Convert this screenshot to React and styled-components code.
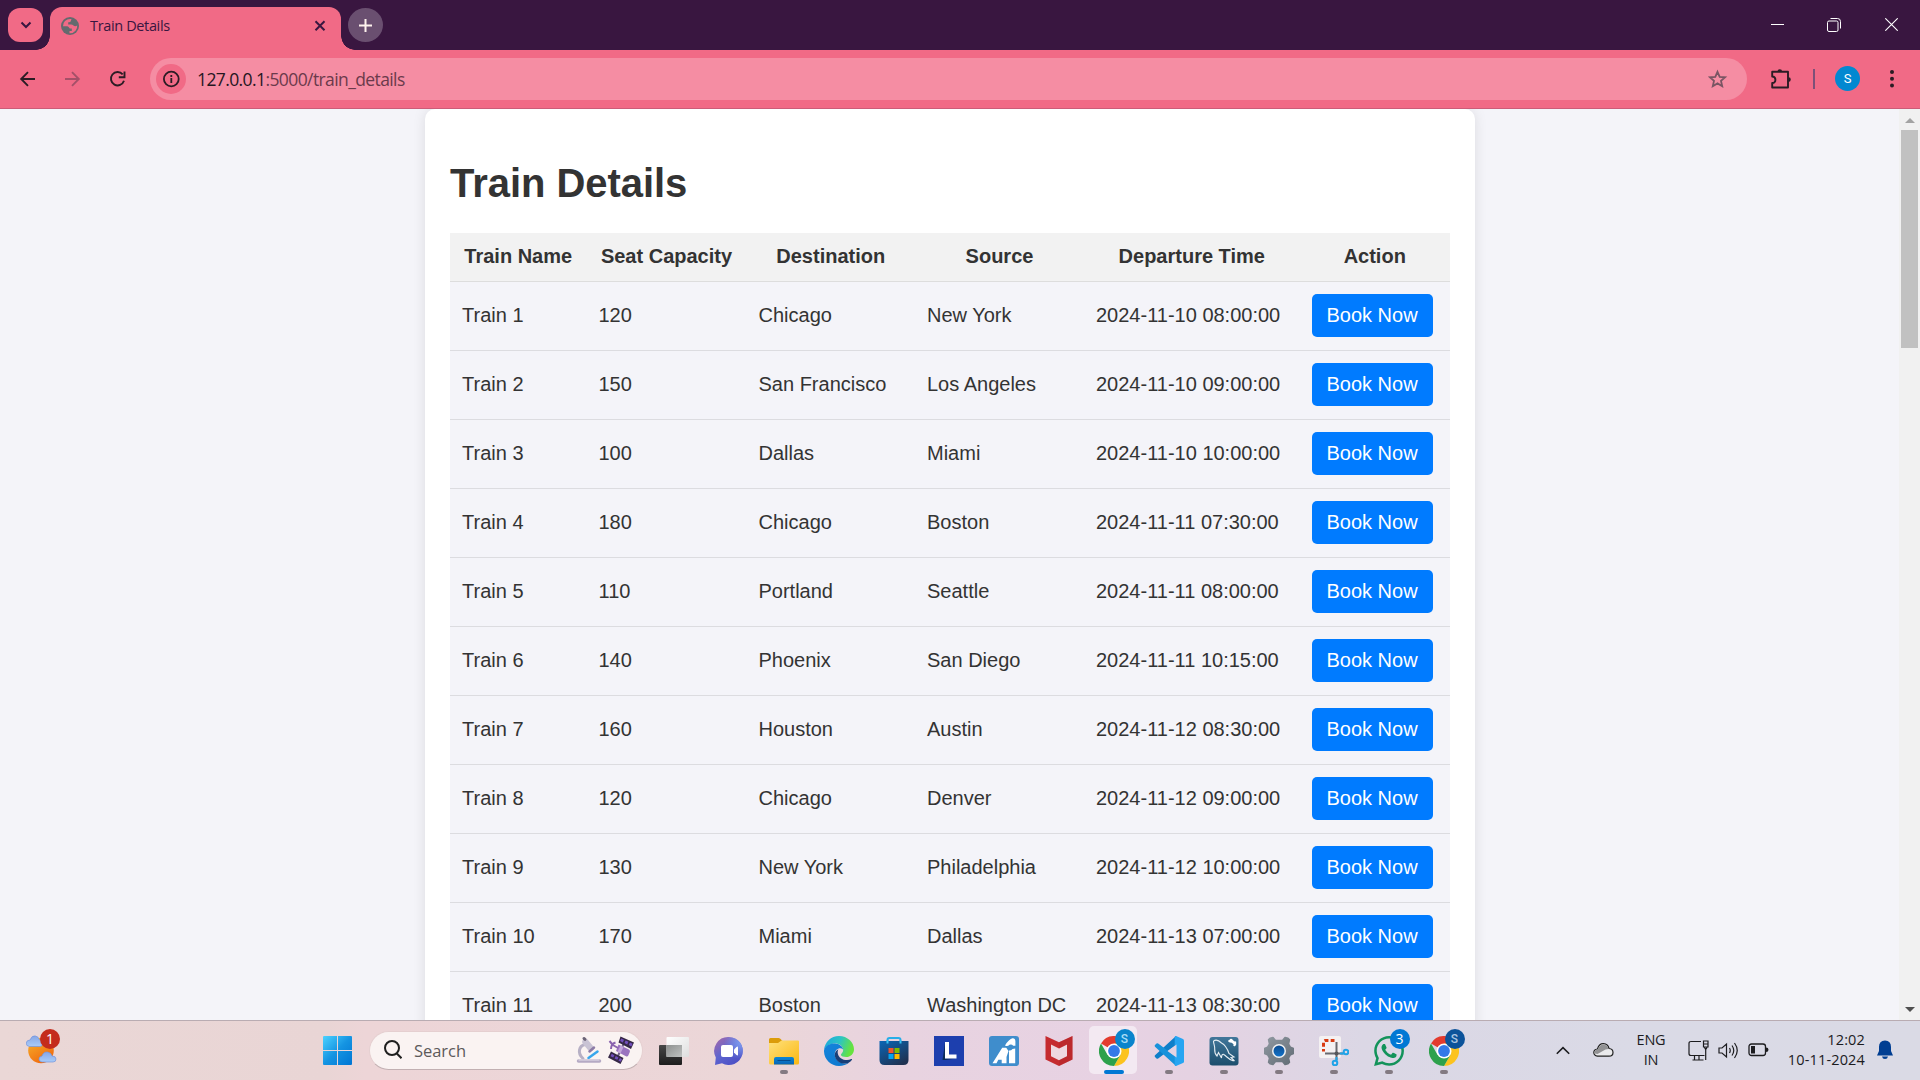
import React from "react";
import styled, { createGlobalStyle } from "styled-components";

const uiFont = `"Segoe UI", "Open Sans", "Noto Sans", sans-serif`;

const GlobalStyle = createGlobalStyle`
  * { box-sizing: border-box; }
  html, body { margin: 0; padding: 0; overflow: hidden; }
  svg { display: block; flex: none; }
`;

/* ---------- window ---------- */
const Screen = styled.div`
  width: 1920px;
  height: 1080px;
  display: flex;
  flex-direction: column;
  overflow: hidden;
  font-family: ${uiFont};
`;

const TabStrip = styled.div`
  height: 50px;
  flex: none;
  display: flex;
  padding: 7px 0 0 8px;
  background: #391640;
`;

const TabSearch = styled.div`
  width: 35px;
  height: 34px;
  margin-top: 1px;
  border-radius: 12px;
  background: #f16a86;
  display: grid;
  place-items: center;
`;

const Tab = styled.div`
  position: relative;
  width: 291px;
  height: 43px;
  margin-left: 7px;
  padding: 0 11px 6px 11px;
  display: flex;
  align-items: center;
  background: #f16a86;
  border-radius: 12px 12px 0 0;
  &::before, &::after {
    content: "";
    position: absolute;
    bottom: 0;
    width: 14px;
    height: 14px;
  }
  &::before { left: -14px; background: radial-gradient(circle at 0 0, transparent 13.5px, #f16a86 14px); }
  &::after { right: -14px; background: radial-gradient(circle at 100% 0, transparent 13.5px, #f16a86 14px); }
`;

const TabTitle = styled.span`
  flex: 1;
  margin-left: 11px;
  font-size: 14.5px;
  letter-spacing: -0.36px;
  line-height: 20px;
  color: #391640;
  white-space: nowrap;
`;

const NewTab = styled.div`
  width: 35px;
  height: 34px;
  margin: 1px 0 0 7px;
  border-radius: 50%;
  background: #6a4f70;
  display: grid;
  place-items: center;
`;

const WindowControls = styled.div`
  margin-left: auto;
  height: 35px;
  display: flex;
`;

const WindowButton = styled.div`
  width: 57px;
  display: grid;
  place-items: center;
`;

const Toolbar = styled.div`
  height: 59px;
  flex: none;
  display: flex;
  align-items: center;
  padding: 0 17px;
  background: #f16a86;
  border-bottom: 1px solid #cc5c78;
`;

const NavButton = styled.div`
  width: 45px;
  height: 30px;
  display: flex;
  align-items: center;
`;

const AddressBar = styled.div`
  width: 1597px;
  height: 42px;
  margin-left: -2px;
  padding: 0 19px 0 6px;
  border-radius: 21px;
  background: #f58da3;
  display: flex;
  align-items: center;
`;

const SiteInfo = styled.div`
  width: 30px;
  height: 30px;
  border-radius: 50%;
  background: #f16a86;
  display: grid;
  place-items: center;
`;

const Url = styled.div`
  flex: 1;
  margin-left: 11px;
  font-size: 17.5px;
  letter-spacing: -0.6px;
  line-height: 24px;
  color: #6b3a4b;
  white-space: nowrap;
`;

const UrlHost = styled.span`
  color: #25161f;
`;

const ExtensionsButton = styled.div`
  width: 22px;
  margin-left: 23px;
`;

const ToolbarDivider = styled.div`
  width: 2px;
  height: 20px;
  margin: 0 20px 0 21px;
  background: #7d5078;
`;

const Avatar = styled.div`
  width: 25px;
  height: 25px;
  margin-bottom: 1px;
  border-radius: 50%;
  background: #0288d1;
  color: #fff;
  font: 13px/25px Roboto, sans-serif;
  text-align: center;
`;

const MenuButton = styled.div`
  width: 6px;
  margin-left: 29px;
`;

/* ---------- page ---------- */
const Viewport = styled.div`
  height: 911px;
  flex: none;
  display: flex;
  overflow: hidden;
`;

const Page = styled.div`
  width: 1899px;
  background: #f4f4f9;
  display: flex;
  align-items: flex-start;
  padding-left: 425px;
  font-family: Arial, "Liberation Sans", sans-serif;
  color: #333;
`;

const Card = styled.div`
  width: 1050px;
  height: 1400px;
  flex: none;
  padding: 25px;
  background: #fff;
  border-radius: 10px;
  box-shadow: 0 0 12.5px rgba(0, 0, 0, 0.1);
`;

const Title = styled.h1`
  margin: 26px 0 27px;
  font-size: 40px;
  line-height: 46px;
  font-weight: bold;
  letter-spacing: -0.05px;
`;

const Table = styled.table`
  width: 1000px;
  table-layout: fixed;
  border-spacing: 0;
  background: #f4f4f9;
  font-size: 20px;
  line-height: 23px;
`;

const Col = styled.col`
  width: ${(p) => p.$w}px;
`;

const Th = styled.th`
  height: 49px;
  padding: 0 12px 2px;
  background: #f2f2f2;
  border-bottom: 1px solid #ddd;
  text-align: center;
  white-space: nowrap;
`;

const Td = styled.td`
  height: 69px;
  padding: 0 12px 2px 12px;
  border-bottom: 1px solid #dcdce0;
  white-space: nowrap;
`;

const BookButton = styled.button`
  display: block;
  width: 121px;
  height: 43px;
  padding: 0;
  border: 0;
  border-radius: 5px;
  background: #007bff;
  color: #fff;
  font: inherit;
`;

const Scrollbar = styled.div`
  width: 21px;
  background: #f1f1f1;
  display: flex;
  flex-direction: column;
  align-items: center;
  padding: 9px 0 8px;
`;

const Thumb = styled.div`
  width: 17px;
  height: 218px;
  margin-top: 7px;
  margin-bottom: auto;
  background: #c1c1c1;
`;

const ScrollArrow = styled.div`
  width: 0;
  height: 0;
  border: 5px solid transparent;
  ${(p) => (p.$up ? "border-top: 0; border-bottom-color: #a3a3a3; height: 5px;" : "border-bottom: 0; border-top-color: #505050;")}
`;

/* ---------- taskbar ---------- */
const Taskbar = styled.div`
  height: 60px;
  flex: none;
  display: flex;
  align-items: center;
  border-top: 1px solid #b9acb2;
  background: linear-gradient(90deg, #ead7d6 0, #e9d5d5 17%, #edd5d7 19%, #ebd6d8 40%, #e8d3e0 47%, #e7d2e3 58%, #e5d2e2 62%, #dbd7e5 71%, #dadae6 85%, #dadae5 100%);
`;

const Weather = styled.div`
  position: relative;
  width: 34px;
  height: 38px;
  margin-left: 26px;
`;

const WeatherBadge = styled.div`
  position: absolute;
  left: 14px;
  top: -3px;
  width: 20px;
  height: 20px;
  border-radius: 50%;
  background: #c42b1c;
  color: #fff;
  font-size: 14px;
  line-height: 20px;
  text-align: center;
`;

const StartButton = styled.div`
  width: 29px;
  margin-left: 263px;
`;

const SearchBox = styled.div`
  width: 274px;
  height: 39px;
  margin: 0 0 1px 17px;
  padding: 0 8px 0 14px;
  border: 1px solid #e5cfd0;
  border-bottom-color: #c2b0b2;
  border-radius: 20px;
  background: #faf3f2;
  display: flex;
  align-items: center;
`;

const SearchLabel = styled.span`
  flex: 1;
  margin-left: 12px;
  font-size: 16.5px;
  letter-spacing: -0.05px;
  color: #5d5a5a;
`;

const Highlights = styled.div`
  display: flex;
  gap: 6px;
`;

const Apps = styled.div`
  display: flex;
  margin-left: 3px;
`;

const AppSlot = styled.div`
  position: relative;
  width: 55px;
  height: 59px;
  display: grid;
  place-items: center;
`;

const ActivePlate = styled.div`
  position: absolute;
  left: 3px;
  top: 5px;
  width: 48px;
  height: 48px;
  border-radius: 5px;
  background: #f3e9f2;
`;

const AppIcon = styled.div`
  position: relative;
`;

const Indicator = styled.div`
  position: absolute;
  left: ${(p) => (p.$active ? 17.5 : 23.5)}px;
  top: 49px;
  width: ${(p) => (p.$active ? 20 : 8)}px;
  height: 4px;
  border-radius: 2px;
  background: ${(p) => (p.$active ? "#0078d4" : "#837a82")};
`;

const AppBadge = styled.div`
  position: absolute;
  left: 28.5px;
  top: 8px;
  width: 20px;
  height: 20px;
  border-radius: 50%;
  background: ${(p) => p.$bg};
  color: ${(p) => p.$fg || "#fff"};
  font-family: ${(p) => (p.$letter ? "Roboto, sans-serif" : uiFont)};
  font-size: ${(p) => (p.$letter ? 12 : 14)}px;
  font-weight: ${(p) => (p.$letter ? 500 : 400)};
  line-height: 20px;
  text-align: center;
`;

const Tray = styled.div`
  margin-left: auto;
  height: 59px;
  display: flex;
  align-items: center;
  padding: 0 27px 1px 0;
  color: #1c1c1f;
`;

const TrayItem = styled.div`
  width: ${(p) => p.$w}px;
  margin-left: ${(p) => p.$gap || 0}px;
  display: grid;
  place-items: center;
`;

const TrayText = styled.div`
  width: ${(p) => p.$w}px;
  font-size: 14.5px;
  line-height: 20px;
  letter-spacing: ${(p) => p.$ls}px;
  text-align: ${(p) => p.$align || "center"};
  white-space: nowrap;
`;

/* ---------- icons ---------- */
const Globe = () => (
  <svg width="18" height="18" viewBox="0 0 18 18">
    <circle cx="9" cy="9" r="9" fill="#646a6e" />
    <path fill="#f16a86" d="M10.500 2Q6.500 1.500 4 4 1.700 6.300 2 9.200h4.200q1.400 0 2 1.500l.6.800h2v2.500H8.500v2.200q4 .2 6.200-2.700 1.800-2.600 1.500-5-2.200 1.300-3.700 0Q11.500 7.500 10 7.500H7.200V5.300q2.200.3 2.500-1z" />
  </svg>
);

const ChromeIcon = () => (
  <svg width="30" height="30" viewBox="0 0 30 30">
    <path fill="#e33b2e" d="M15 15 2 7.500A15 15 0 0 1 28 7.500z" />
    <path fill="#fcc31e" d="M15 15V7.500h13A15 15 0 0 1 15 30l6.500-11.200z" />
    <path fill="#2da14c" d="M15 15l6.500 3.800L15 30A15 15 0 0 1 2 7.500l6.500 11.300z" />
    <circle cx="15" cy="15" r="7.500" fill="#fff" />
    <circle cx="15" cy="15" r="5.900" fill="#3479e8" />
  </svg>
);

const TaskViewIcon = () => (
  <svg width="30" height="30" viewBox="0 0 30 30">
    <defs>
      <linearGradient id="tvw" x2="1" y2="1"><stop stopColor="#fff" /><stop offset="1" stopColor="#dedede" /></linearGradient>
      <linearGradient id="tvd" x2="0" y2="1"><stop stopColor="#474747" /><stop offset="1" stopColor="#1d1d1d" /></linearGradient>
      <linearGradient id="tvm" x2="1" y2="1"><stop stopColor="#8d908f" /><stop offset="1" stopColor="#bfc2c1" /></linearGradient>
    </defs>
    <rect y="9" width="23" height="20" rx="1" fill="url(#tvd)" />
    <rect x="7.500" y="1" width="22.500" height="20" rx="1" fill="url(#tvw)" />
    <path d="M7.500 9H23v12H7.500z" fill="url(#tvm)" />
  </svg>
);

const ChatIcon = () => (
  <svg width="30" height="30" viewBox="0 0 30 30">
    <defs><linearGradient id="chat" x1=".1" y1=".1" x2=".8" y2="1"><stop stopColor="#9a68b0" /><stop offset=".45" stopColor="#5e64cf" /><stop offset="1" stopColor="#4a4dc4" /></linearGradient>
      <radialGradient id="chat2" cx=".95" cy=".2" r=".6"><stop stopColor="#7e9df0" /><stop offset="1" stopColor="#7e9df0" stopOpacity="0" /></radialGradient></defs>
    <path fill="url(#chat)" d="M15 1a14 14 0 1 1-7 26.200L1 29l.8-7.500A14 14 0 0 1 15 1z" />
    <path fill="url(#chat2)" d="M15 1a14 14 0 1 1-7 26.200L1 29l.8-7.500A14 14 0 0 1 15 1z" />
    <rect x="7" y="9" width="12" height="12" rx="2" fill="#fff" />
    <path fill="#fff" d="M20 13.500l2.500-2.500q1.500-1 1.500.5v7q0 1.500-1.500.5L20 16.500z" />
  </svg>
);

const FolderIcon = () => (
  <svg width="30" height="30" viewBox="0 0 30 30">
    <defs><linearGradient id="fold" x2="1" y2="1"><stop stopColor="#ffe17c" /><stop offset="1" stopColor="#fbb812" /></linearGradient>
      <linearGradient id="foldb" x2="0" y2="1"><stop stopColor="#0b86d6" /><stop offset="1" stopColor="#0a65b4" /></linearGradient></defs>
    <path fill="#dc9c09" d="M0 3.500Q0 2 1.500 2h8q1 0 1.800.8L13.500 5H28v7H0z" />
    <path fill="url(#fold)" d="M0 7h9l3.500-2.500H29q1 0 1 1V27q0 1.500-1.500 1.500h-27Q0 28.500 0 27z" />
    <path fill="url(#foldb)" d="M5 28.500V23q0-2 2-2h16q2 0 2 2v5.500z" />
    <path stroke="#064c8d" d="M8.500 24.500h13" />
  </svg>
);

const EdgeIcon = () => (
  <svg width="30" height="30" viewBox="0 0 30 30">
    <defs>
      <linearGradient id="e1" x2="1" y2=".3"><stop stopColor="#1aa5e0" /><stop offset=".55" stopColor="#2cc4c4" /><stop offset="1" stopColor="#66e33f" /></linearGradient>
      <linearGradient id="e2" x2=".6" y2="1"><stop stopColor="#1584dc" /><stop offset="1" stopColor="#0e79cf" /></linearGradient>
    </defs>
    <path fill="url(#e1)" d="M0 14C.8 6 7 0 15 0c8.500 0 15 6.500 15 13.200 0 4.800-3.700 7.800-7.800 7.800-2.700 0-5.300-1-5.300-2.300 0-.8 2.300-2 2.300-4.600 0-4-3.800-6.600-8-6.600C6 7.500 2 10 0 14z" />
    <path fill="url(#e2)" d="M0 14.500C1 9.500 6 7.300 10.800 7.500c4.800.2 7.800 2.900 8.300 5.900-3-2.600-8.300-.4-8.300 4.800 0 5.500 5 10 11.500 9.200 1-.1 2.300-.5 3-.8C22.500 29 19 30 15 30 6.500 30-.3 23 0 14.500z" />
    <path fill="#183f78" d="M14.500 13.200c-2.200 1-3.700 3-3.700 5.500 0 5.500 5 9.500 11.200 8.800 2.500-.3 4.500-1.700 6-3.800.3-.6-.1-.9-.7-.6-5.500 2.500-13-.3-13.600-6.200-.1-1.300.1-2.600.8-3.700z" />
  </svg>
);

const StoreIcon = () => (
  <svg width="30" height="30" viewBox="0 0 30 30">
    <defs><linearGradient id="st" x2=".7" y2="1"><stop stopColor="#0a66b6" /><stop offset="1" stopColor="#1f3252" /></linearGradient></defs>
    <path d="M8.500 8V4q0-2 2-2h9q2 0 2 2v4" fill="none" stroke="#27aee8" strokeWidth="2" />
    <path d="M.5 5h29v19q0 5-5 5h-19q-5 0-5-5z" fill="url(#st)" />
    <path fill="#f2552c" d="M9.500 12h5v5h-5z" /><path fill="#7fba00" d="M15.500 12h5v5h-5z" />
    <path fill="#05a4f0" d="M9.500 18h5v5h-5z" /><path fill="#ffb900" d="M15.500 18h5v5h-5z" />
    <path d="M8.500 4.500v3M21.500 4.500v3" stroke="#35c3f4" strokeWidth="2" />
  </svg>
);

const LIcon = () => (
  <svg width="30" height="30" viewBox="0 0 30 30">
    <path fill="#1d3fae" d="M0 0h30v30H0z" />
    <path fill="#0b2b59" d="M11 7L8.500 24h3L22 22.500H11z" />
    <path fill="#fff" d="M11 6h4v12.500h7.500v4H11z" />
  </svg>
);

const AiIcon = () => (
  <svg width="30" height="30" viewBox="0 0 30 30">
    <rect width="30" height="30" rx="3" fill="#3f8dcc" />
    <path fill="#fff" d="M3.500 27.300L13.200 11.800h4L19.500 15 17.500 21v6.300H12.700v-3.600H9.300l-1.800 3.600z" />
    <path fill="#fff" d="M20 14.500q2 .3 3.500-1.500l2.700-.5v14.800H20z" />
    <path fill="#fff" d="M16 9.500Q20 3 23.500 2.300q2.800-.2 2.900 3v4.500h-2.200q-1.500-1.800-3.700-1-2 2-4.500.7z" />
  </svg>
);

const McAfeeIcon = () => (
  <svg width="28" height="30" viewBox="0 0 28 30">
    <path fill="#c52b2f" d="M.5 0L14 6.200 27.500 0v23.500L14 30 .5 23.500z" />
    <path fill="#eed8e0" d="M6 8.500l8 4 8-4v11.800l-8 4-8-4z" />
    <path fill="#a92328" d="M14 6.200L27.500 0v23.500L14 30v-5.700l8-4V8.500l-8 4z" opacity=".3" />
  </svg>
);

const CodeIcon = () => (
  <svg width="30" height="30" viewBox="0 0 30 30">
    <path fill="#0f7fc9" d="M22 0L1 19.300q-.8.800 0 1.600l1.500 1.500q.8.700 1.700 0L24 7.500z" />
    <path fill="#1792db" d="M22 30L1 10.700q-.8-.8 0-1.600l1.500-1.500q.8-.7 1.700 0L24 22.500z" />
    <path fill="#27a5f2" d="M22 0l7 3q1 .5 1 1.600v20.800q0 1.100-1 1.600l-7 3q-1.300.2-1.300-1.300V1.300Q20.700-.2 22 0z" />
    <path fill="#e4d3e3" d="M22.500 8.500v13L13.500 15z" />
  </svg>
);

const DolphinIcon = () => (
  <svg width="30" height="30" viewBox="0 0 30 30">
    <defs><linearGradient id="dol" x2="0" y2="1"><stop stopColor="#41779a" /><stop offset="1" stopColor="#1d4e6d" /></linearGradient></defs>
    <rect x=".5" y="1" width="29" height="28.500" rx="3" fill="url(#dol)" />
    <path fill="none" stroke="#e5edf2" strokeWidth="1.100" d="M4.500 5c3-2 6 0 8 2 4 2 6 6 7.500 10.500l5 3.500-3 .5 3.500 3.500M4.500 5c0 3 1.500 5 1.200 8-.2 3 .3 5 2.300 7l1.500-3.500 3 5.500c0-3 1-5 3-3 2.500 2 5 5 9 6" />
    <path stroke="#fff" strokeWidth="2.500" strokeLinecap="round" d="M22 4l4 4M20.500 5l2 .5M26 6.500l-.5 2.500" />
  </svg>
);

const GearIcon = () => (
  <svg width="30" height="30" viewBox="0 0 30 30">
    <defs><linearGradient id="gr" x2="1" y2="1"><stop stopColor="#9099a1" /><stop offset="1" stopColor="#626c75" /></linearGradient>
      <linearGradient id="gb" x2="0" y2="1"><stop stopColor="#0b4c91" /><stop offset="1" stopColor="#1272c8" /></linearGradient></defs>
    <path fill="url(#gr)" stroke="url(#gr)" strokeWidth="1.500" strokeLinejoin="round" d="M6 2.200l3-.7 2.500 3h7l2.500-3 3 .7 1.500 1.500-1 4.300 2 3.300 3 1.200v5l-3 1.200-2 3.300 1 4.300-1.500 1.500-3 .7-2.500-3h-7l-2.500 3-3-.7L4.500 26.300l1-4.300-2-3.300-3-1.200v-5l3-1.200 2-3.300-1-4.300z" />
    <circle cx="15" cy="15" r="7" fill="#f1f2f3" />
    <circle cx="15" cy="15" r="5.500" fill="url(#gb)" />
  </svg>
);

const SnipIcon = () => (
  <svg width="30" height="30" viewBox="0 0 30 30">
    <rect width="22" height="22" rx="2" fill="#f4f1f2" />
    <path fill="none" stroke="#d83b12" strokeWidth="3" strokeDasharray="3.800 2.300" d="M15.500 4.500h-9q-2 0-2 2v9" />
    <path stroke="#68696e" strokeWidth="2" d="M17.500 6v18M6 17.500h18" />
    <circle cx="17.500" cy="17.500" r="2" fill="#55565a" />
    <g fill="none" stroke="#1fa3e8" strokeWidth="2"><circle cx="16" cy="27" r="2.300" /><circle cx="27" cy="16" r="2.300" /><path d="M17.500 21v4M21 17.500h4" /></g>
  </svg>
);

const PhoneChatIcon = () => (
  <svg width="30" height="30" viewBox="0 0 24 24">
    <path fill="#13935a" d="M17.472 14.382c-.297-.149-1.758-.867-2.030-.967-.273-.099-.471-.148-.67.150-.197.297-.767.966-.94 1.164-.173.199-.347.223-.644.075-.297-.150-1.255-.463-2.390-1.475-.883-.788-1.480-1.761-1.653-2.059-.173-.297-.018-.458.130-.606.134-.133.298-.347.446-.52.149-.174.198-.298.298-.497.099-.198.050-.371-.025-.52-.075-.149-.669-1.612-.916-2.207-.242-.579-.487-.5-.669-.51-.173-.008-.371-.010-.57-.010-.198 0-.52.074-.792.372-.272.297-1.040 1.016-1.040 2.479 0 1.462 1.065 2.875 1.213 3.074.149.198 2.096 3.200 5.077 4.487.709.306 1.262.489 1.694.625.712.227 1.360.195 1.871.118.571-.085 1.758-.719 2.006-1.413.248-.694.248-1.289.173-1.413-.074-.124-.272-.198-.57-.347m-5.421 7.403h-.004a9.870 9.870 0 0 1-5.031-1.378l-.361-.214-3.741.982.998-3.648-.235-.374a9.860 9.860 0 0 1-1.510-5.260c.001-5.450 4.436-9.884 9.888-9.884 2.640 0 5.122 1.030 6.988 2.898a9.825 9.825 0 0 1 2.893 6.994c-.003 5.450-4.437 9.884-9.885 9.884m8.413-18.297A11.815 11.815 0 0 0 12.050 0C5.495 0 .16 5.335.157 11.892c0 2.096.547 4.142 1.588 5.945L.057 24l6.305-1.654a11.882 11.882 0 0 0 5.683 1.448h.005c6.554 0 11.890-5.335 11.893-11.893a11.821 11.821 0 0 0-3.480-8.413z" />
  </svg>
);

const WeatherIcon = () => (
  <svg width="34" height="38" viewBox="0 0 34 38">
    <defs>
      <linearGradient id="sun" x2=".6" y2="1"><stop stopColor="#f7b52c" /><stop offset="1" stopColor="#f0690f" /></linearGradient>
      <linearGradient id="cld" x2="0" y2="1"><stop stopColor="#86a6e6" /><stop offset="1" stopColor="#a9ccf9" /></linearGradient>
    </defs>
    <circle cx="15" cy="18.500" r="12.800" fill="url(#sun)" />
    <path fill="url(#cld)" stroke="#7595db" strokeWidth=".7" d="M3.500 14.500q-3.500-.5-3.300-3.500.5-3 3.800-3Q6 3 9.500 4q3 .5 4 4 3 0 3 3.500 0 3-2.500 3z" />
    <path fill="url(#cld)" stroke="#7595db" strokeWidth=".7" d="M16 30q-3-.5-3-3t3-3q1.500-4.500 5.500-4 3.500.5 4.500 4 4 0 4 3t-3 3z" />
  </svg>
);

const MicroscopeIcon = () => (
  <svg width="26" height="28" viewBox="0 0 26 28" fill="none" strokeLinecap="round">
    <path stroke="#b7b0c5" strokeWidth="3" d="M7 22.500C1 17 3 10 9 8.500" />
    <path stroke="#c9c3d4" strokeWidth="6.500" d="M9.500 6l5 6" />
    <path stroke="#8c7ba6" strokeWidth="2.500" d="M13.500 15.500l4.500-4" />
    <path stroke="#6b6476" strokeWidth="3" d="M8 2.500l1 .8" />
    <path stroke="#37a6ec" strokeWidth="2.500" d="M12.500 22l9-6.500" />
    <path stroke="#b5aac4" strokeWidth="3.500" d="M2.500 25h21" />
    <path stroke="#e6e0eb" strokeWidth="1" d="M3 24h20" />
  </svg>
);

const SatelliteIcon = () => (
  <svg width="26" height="28" viewBox="0 0 26 28">
    <path stroke="#75658b" strokeWidth="2" d="M17 5L9 22" />
    <path fill="#352746" d="M12.500.5l13.500 6-3 6.500-12.500-6.500zM3 15.500L15.500 22l-3 6L0 21.500z" />
    <path fill="#7350bd" d="M13.200 2.500l2.800 1.300-1.200 2.600-2.700-1.400zM17.600 4.500l2.800 1.300-1.200 2.600-2.700-1.300zM22 6.500l2.600 1.200-1.200 2.700-2.700-1.400zM3.700 17.800l2.700 1.400-1.200 2.400-2.700-1.300zM7.800 20l2.700 1.400-1.200 2.400-2.700-1.400zM12 22l2 1.200-1.300 2.600-2.300-1.300z" />
    <path fill="#9a73bf" d="M10.500 8.500L21 13.500q1.500 1 .8 2.500l-1.500 3.500q-.8 1.300-2.300.7L8 15z" />
    <path fill="#c4a6db" d="M12.500 9.500l3 1.400-3 6.500-3-1.500z" />
    <path fill="none" stroke="#8a63ae" strokeWidth="2" d="M10 12L4 8.500M7.500 6.500Q3 8 3 13M1.500 5l2.500 3" />
  </svg>
);

/* ---------- data ---------- */
const columns = [
  { name: "Train Name", w: 136.5 },
  { name: "Seat Capacity", w: 160 },
  { name: "Destination", w: 168.5 },
  { name: "Source", w: 169 },
  { name: "Departure Time", w: 215.5 },
  { name: "Action", w: 150.5 },
];

const trains = [
  ["Train 1", 120, "Chicago", "New York", "2024-11-10 08:00:00"],
  ["Train 2", 150, "San Francisco", "Los Angeles", "2024-11-10 09:00:00"],
  ["Train 3", 100, "Dallas", "Miami", "2024-11-10 10:00:00"],
  ["Train 4", 180, "Chicago", "Boston", "2024-11-11 07:30:00"],
  ["Train 5", 110, "Portland", "Seattle", "2024-11-11 08:00:00"],
  ["Train 6", 140, "Phoenix", "San Diego", "2024-11-11 10:15:00"],
  ["Train 7", 160, "Houston", "Austin", "2024-11-12 08:30:00"],
  ["Train 8", 120, "Chicago", "Denver", "2024-11-12 09:00:00"],
  ["Train 9", 130, "New York", "Philadelphia", "2024-11-12 10:00:00"],
  ["Train 10", 170, "Miami", "Dallas", "2024-11-13 07:00:00"],
  ["Train 11", 200, "Boston", "Washington DC", "2024-11-13 08:30:00"],
];

const apps = [
  { id: "taskview", Icon: TaskViewIcon },
  { id: "chat", Icon: ChatIcon },
  { id: "explorer", Icon: FolderIcon, running: true },
  { id: "edge", Icon: EdgeIcon },
  { id: "store", Icon: StoreIcon },
  { id: "l", Icon: LIcon },
  { id: "ai", Icon: AiIcon },
  { id: "mcafee", Icon: McAfeeIcon },
  { id: "chrome", Icon: ChromeIcon, active: true, badge: { text: "S", bg: "#0a84cc", fg: "#a8dcf5", letter: true } },
  { id: "code", Icon: CodeIcon, running: true },
  { id: "dolphin", Icon: DolphinIcon, running: true },
  { id: "settings", Icon: GearIcon, running: true },
  { id: "snip", Icon: SnipIcon, running: true },
  { id: "whatsapp", Icon: PhoneChatIcon, running: true, badge: { text: "3", bg: "#0078d4" } },
  { id: "chrome2", Icon: ChromeIcon, running: true, badge: { text: "S", bg: "#0c539a", fg: "#a9c4e0", letter: true } },
];

/* ---------- sections ---------- */
const BrowserTabs = () => (
  <TabStrip>
    <TabSearch>
      <svg width="12" height="8" viewBox="0 0 12 8" fill="none" stroke="#391640" strokeWidth="2"><path d="M1.500 1.500L6 6l4.500-4.500" /></svg>
    </TabSearch>
    <Tab>
      <Globe />
      <TabTitle>Train Details</TabTitle>
      <svg width="20" height="20" viewBox="0 0 20 20" stroke="#391640" strokeWidth="2"><path d="M5.500 5.200l9 9M14.500 5.200l-9 9" /></svg>
    </Tab>
    <NewTab>
      <svg width="13" height="13" viewBox="0 0 13 13" stroke="#fff3ee" strokeWidth="2"><path d="M0 6.500h13M6.500 0v13" /></svg>
    </NewTab>
    <WindowControls>
      <WindowButton><svg width="13" height="13" viewBox="0 0 13 13" stroke="#fff"><path d="M0 6.500h13" /></svg></WindowButton>
      <WindowButton>
        <svg width="15" height="14" viewBox="0 0 15 14" fill="none" stroke="#fff"><rect x=".5" y="3" width="10.500" height="10.500" rx="1.500" /><path d="M3.500.5h7q3 0 3 3v7" /></svg>
      </WindowButton>
      <WindowButton><svg width="13" height="13" viewBox="0 0 13 13" stroke="#fff" strokeWidth="1.100"><path d="M.3.3l12.400 12.400M12.700.3L.3 12.700" /></svg></WindowButton>
    </WindowControls>
  </TabStrip>
);

const BrowserToolbar = () => (
  <Toolbar>
    <NavButton>
      <svg width="20" height="20" viewBox="0 0 20 20" fill="none" stroke="#2b1c24" strokeWidth="1.900"><path d="M18 10H4.500M11 3.200L4.200 10l6.800 6.800" /></svg>
    </NavButton>
    <NavButton>
      <svg width="20" height="20" viewBox="0 0 20 20" fill="none" stroke="#a55068" strokeWidth="1.900"><path d="M3 10h13.500M10 3.200l6.800 6.800-6.800 6.800" /></svg>
    </NavButton>
    <NavButton>
      <svg width="20" height="20" viewBox="0 0 20 20" fill="none" stroke="#2b1c24" strokeWidth="1.900"><path d="M17 11.800A6.700 6.700 0 1 1 15.700 5.300M17.500 2.500v5.700h-5.700" /></svg>
    </NavButton>
    <AddressBar>
      <SiteInfo>
        <svg width="18" height="18" viewBox="0 0 18 18" fill="none" stroke="#2b1c24" strokeWidth="1.800"><circle cx="9.300" cy="9" r="7.400" /><path d="M9.300 8v5M9.300 5v2" /></svg>
      </SiteInfo>
      <Url><UrlHost>127.0.0.1</UrlHost>:5000/train_details</Url>
      <svg width="20" height="20" viewBox="0 0 20 20" fill="none" stroke="#795563" strokeWidth="1.800"><path d="M9.500 2.800l2.200 5 5.400.5-4.100 3.600 1.200 5.300-4.700-2.800-4.700 2.800L6 11.900 1.900 8.300l5.400-.5z" /></svg>
    </AddressBar>
    <ExtensionsButton>
      <svg width="22" height="22" viewBox="0 0 22 22" fill="none" stroke="#2b1c24" strokeWidth="1.900">
        <path strokeLinejoin="round" d="M2.200 3.800H18v15.700H2.200V15q3.200 0 3.200-3.200T2.200 8.500z" />
        <path fill="#2b1c24" stroke="none" d="M7.500 3.500a2.300 2.300 0 0 1 4.600 0zM18.500 9.300a2.300 2.300 0 0 1 0 4.600z" />
      </svg>
    </ExtensionsButton>
    <ToolbarDivider />
    <Avatar>S</Avatar>
    <MenuButton>
      <svg width="6" height="20" viewBox="0 0 6 20" fill="#2b1c24"><circle cx="3" cy="3" r="2" /><circle cx="3" cy="9.800" r="2" /><circle cx="3" cy="16.600" r="2" /></svg>
    </MenuButton>
  </Toolbar>
);

const TrainTable = () => (
  <Table>
    <colgroup>{columns.map((c) => <Col key={c.name} $w={c.w} />)}</colgroup>
    <thead>
      <tr>{columns.map((c) => <Th key={c.name}>{c.name}</Th>)}</tr>
    </thead>
    <tbody>
      {trains.map((t) => (
        <tr key={t[0]}>
          {t.map((v, i) => <Td key={i}>{v}</Td>)}
          <Td><BookButton>Book Now</BookButton></Td>
        </tr>
      ))}
    </tbody>
  </Table>
);

const SystemTray = () => (
  <Tray>
    <TrayItem $w={40}>
      <svg width="14" height="9" viewBox="0 0 14 9" fill="none" stroke="#1c1c1f" strokeWidth="1.600"><path d="M.8 7.800L7 1.600l6.200 6.200" /></svg>
    </TrayItem>
    <TrayItem $w={40}>
      <svg width="21" height="16" viewBox="0 0 21 16"><path fill="#eaeaec" stroke="#222" strokeWidth="1.200" d="M4.500 14.200Q.8 13.500.8 10.500T4.500 7Q6 1.500 10.500 1.700q4.500.3 5.500 4.800 4 .3 4 4t-4 3.700z" /><path fill="#929294" d="M5 7.300q1.500-4.800 5.500-4.900 4 .3 5 4.600l-3 .5-8 4.500-2.800-.5q-.7-3.500 3.300-4.200z" /></svg>
    </TrayItem>
    <TrayText $w={56} $ls={-0.2}>ENG<br />IN</TrayText>
    <TrayItem $w={38}>
      <svg width="21" height="21" viewBox="0 0 21 21" fill="none" stroke="#1c1c1f" strokeWidth="1.200"><path d="M13 1.500H3q-2 0-2 2v10q0 2 2 2h13.500M6.500 16v4M11 16v4M4.500 20h11M15.500 1h4.500v6h-4.500zM15.500 4h4.500M16.500 7.500l1.200 2 1.300-2M17.700 9v11" /></svg>
    </TrayItem>
    <TrayItem $w={22}>
      <svg width="21" height="19" viewBox="0 0 21 19" fill="none" stroke="#1c1c1f" strokeWidth="1.200"><path d="M1 7v5h3l4.500 4V3L4 7zM11.500 7q1.500 2.500 0 5M14 4.500q3.500 5 0 10M16.500 2q5.500 7.500 0 15" /></svg>
    </TrayItem>
    <TrayItem $w={38}>
      <svg width="21" height="14" viewBox="0 0 21 14" fill="none" stroke="#1c1c1f" strokeWidth="1.300"><rect x="1" y="1" width="16.500" height="11.500" rx="2.500" /><path fill="#1c1c1f" stroke="none" d="M3 3h4v7.500H3zM18 4.500q2.500 0 2.500 2.200T18 9z" /></svg>
    </TrayItem>
    <TrayText $w={88} $align="right" $ls={0.15}>12:02<br />10-11-2024</TrayText>
    <TrayItem $w={16} $gap={12}>
      <svg width="16" height="20" viewBox="0 0 16 20" fill="#003e92"><path d="M8 .5q6 .3 6 6.500v4l2 4.500H0L2 11V7Q2 .8 8 .5zM5 16.500h6q-.5 2.500-3 2.500t-3-2.500z" /></svg>
    </TrayItem>
  </Tray>
);

const DesktopTaskbar = () => (
  <Taskbar>
    <Weather><WeatherIcon /><WeatherBadge>1</WeatherBadge></Weather>
    <StartButton>
      <svg width="29" height="29" viewBox="0 0 29 29">
        <defs><linearGradient id="win" gradientUnits="userSpaceOnUse" x1="0" y1="0" x2="29" y2="29"><stop stopColor="#4cd2ff" /><stop offset=".5" stopColor="#1594e2" /><stop offset="1" stopColor="#0075d3" /></linearGradient></defs>
        <path fill="url(#win)" d="M1 0h13v14H0V1q0-1 1-1zM15 0h13q1 0 1 1v13H15zM0 15h14v14H1q-1 0-1-1zM15 15h14v13q0 1-1 1H15z" />
      </svg>
    </StartButton>
    <SearchBox>
      <svg width="18" height="20" viewBox="0 0 18 20" fill="none" stroke="#1f1f1f" strokeWidth="2"><circle cx="8" cy="8" r="7" /><path d="M12.800 13.500l4.700 4.700" /></svg>
      <SearchLabel>Search</SearchLabel>
      <Highlights>
        <MicroscopeIcon />
        <SatelliteIcon />
      </Highlights>
    </SearchBox>
    <Apps>
      {apps.map(({ id, Icon, running, active, badge }) => (
        <AppSlot key={id}>
          {active && <ActivePlate />}
          <AppIcon><Icon /></AppIcon>
          {(running || active) && <Indicator $active={active} />}
          {badge && <AppBadge $bg={badge.bg} $fg={badge.fg} $letter={badge.letter}>{badge.text}</AppBadge>}
        </AppSlot>
      ))}
    </Apps>
    <SystemTray />
  </Taskbar>
);

export default function App() {
  return (
    <Screen>
      <GlobalStyle />
      <BrowserTabs />
      <BrowserToolbar />
      <Viewport>
        <Page>
          <Card>
            <Title>Train Details</Title>
            <TrainTable />
          </Card>
        </Page>
        <Scrollbar>
          <ScrollArrow $up />
          <Thumb />
          <ScrollArrow />
        </Scrollbar>
      </Viewport>
      <DesktopTaskbar />
    </Screen>
  );
}
